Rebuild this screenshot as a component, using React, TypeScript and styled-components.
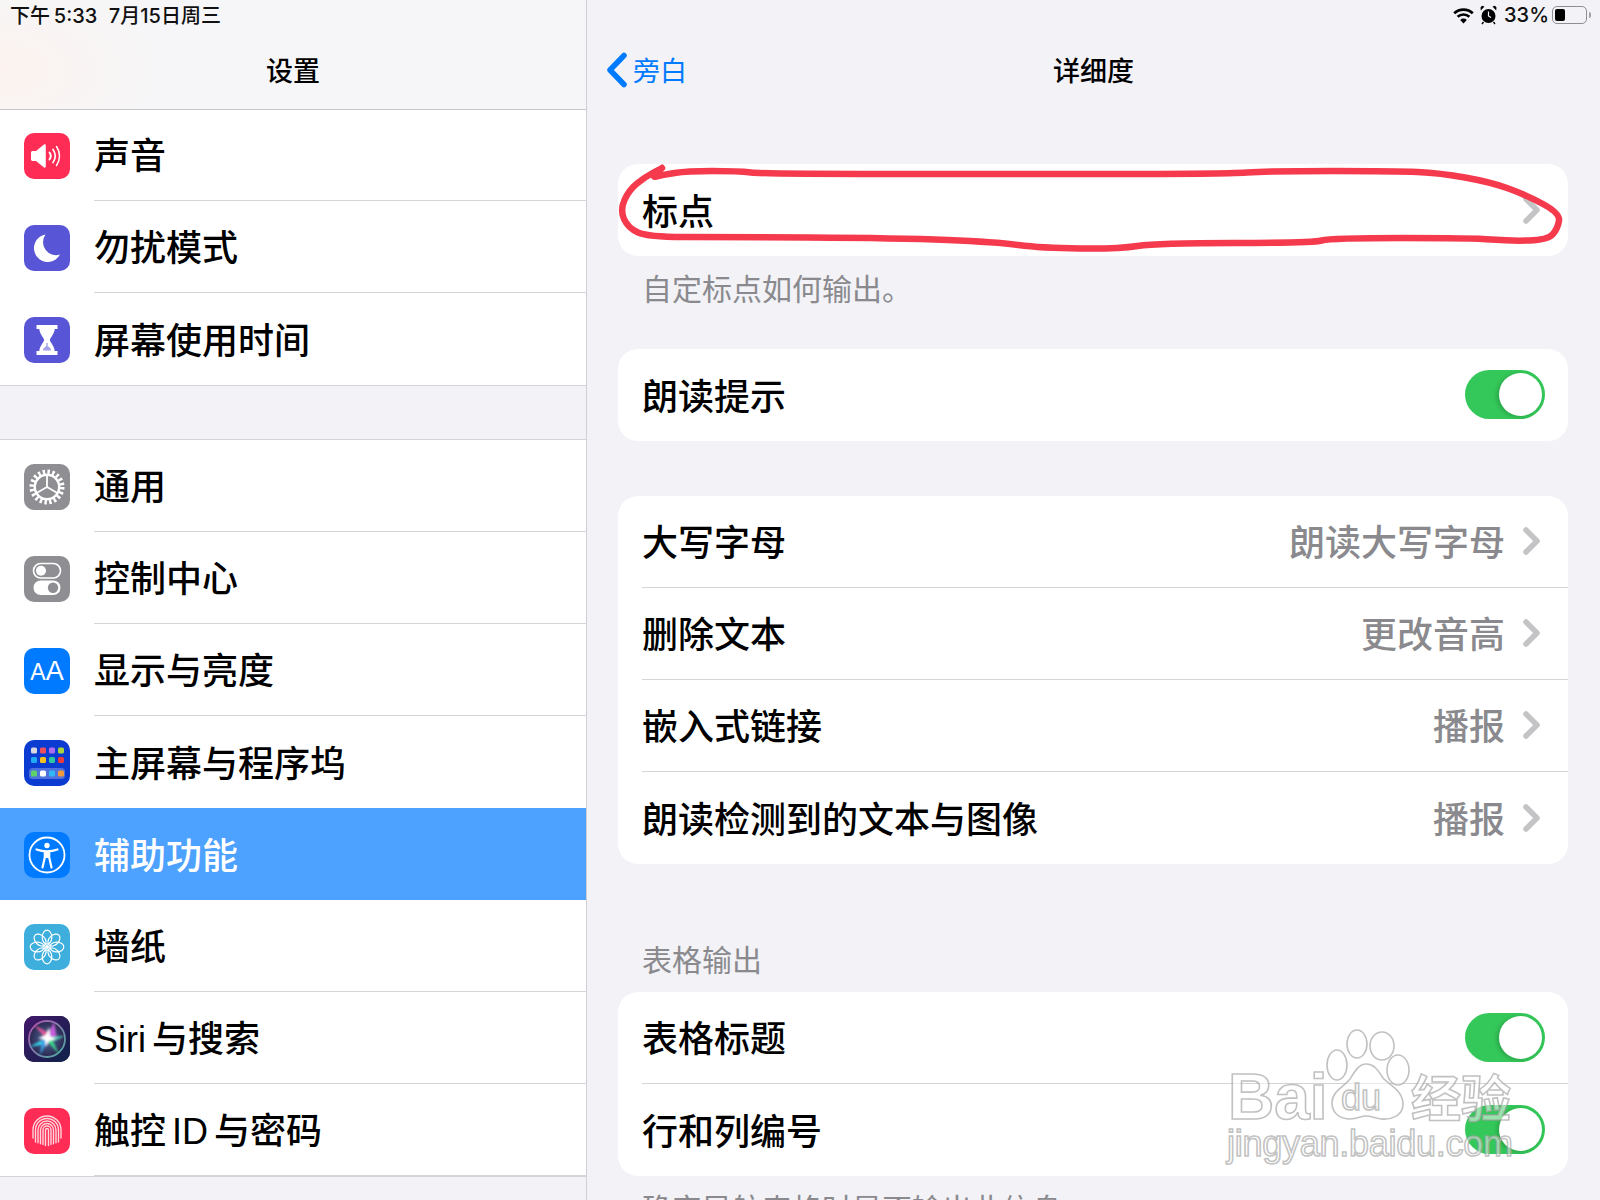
import React from 'react';
import styled, { createGlobalStyle } from 'styled-components';

const GlobalStyle = createGlobalStyle`
  html, body {
    margin: 0;
    padding: 0;
    background: #f2f2f7;
  }
  * {
    box-sizing: border-box;
  }
`;

const fontStack = `Inter, "Noto Sans CJK SC", sans-serif`;
const listFont = `"Liberation Sans", "Noto Sans CJK SC", sans-serif`;

const Page = styled.div`
  position: relative;
  display: flex;
  width: 1600px;
  height: 1200px;
  overflow: hidden;
  font-family: ${fontStack};
  color: #000;
  background: #f2f2f7;
`;

const Sidebar = styled.aside`
  flex: 0 0 587px;
  height: 1200px;
  overflow: hidden;
  border-right: 1px solid #cfcfd6;
  background: #f2f2f7;
`;

const SideHeader = styled.header`
  height: 110px;
  margin-bottom: -1px;
  border-bottom: 1.5px solid #c9c9cd;
  background:
    radial-gradient(ellipse 170px 100px at 0 70px, #fcf3ef 0%, rgba(252, 243, 239, 0) 100%),
    #f6f6f8;
  position: relative;
  z-index: 1;
`;

const StatusBar = styled.div`
  display: flex;
  align-items: center;
  justify-content: space-between;
  height: 28px;
  padding: 0 10px;
  font-size: 20px;
  font-weight: 500;
  word-spacing: -1.5px;
  white-space: pre;
  color: #111;
`;

const StatusRight = styled.div`
  display: flex;
  align-items: center;
  justify-content: flex-end;
  height: 30px;
  padding-right: 9px;
  font-size: 20px;
  font-weight: 500;
  color: #111;
`;

const BarTitle = styled.div`
  height: 80px;
  line-height: 87px;
  text-align: center;
  font-size: 27px;
  font-weight: 500;
`;

const SideGroup = styled.div<{ $gap?: boolean }>`
  margin-top: ${p => (p.$gap ? '54px' : '0')};
  background: #fff;
  border-top: ${p => (p.$gap ? '1.5px solid #d4d4d8' : '0')};
  box-shadow: 0 1px 0 #d4d4d8;
`;

const SideRow = styled.div<{ $active?: boolean }>`
  display: flex;
  align-items: center;
  height: 92px;
  padding-left: 24px;
  background: ${p => (p.$active ? '#4da2ff' : '#fff')};
  color: ${p => (p.$active ? '#fff' : '#000')};
`;

const SideLabel = styled.div<{ $line: 'inset' | 'none' }>`
  display: flex;
  align-items: center;
  flex: 1;
  height: 92px;
  margin-left: 24px;
  padding-bottom: 3px;
  font-family: ${listFont};
  font-size: 36px;
  font-weight: 500;
  word-spacing: -4px;
  white-space: pre;
  border-bottom: ${p => (p.$line === 'inset' ? '1.5px solid #d4d4d8' : '0')};
`;

const IconTile = styled.div<{ $bg: string }>`
  display: flex;
  align-items: center;
  justify-content: center;
  flex: 0 0 46px;
  width: 46px;
  height: 46px;
  margin-top: 2px;
  overflow: hidden;
  border-radius: 10px;
  background: ${p => p.$bg};
`;

const TileText = styled.span`
  font-family: "Liberation Sans", sans-serif;
  font-size: 27px;
  color: #fff;
  letter-spacing: 0;
`;

const SmallA = styled.span`
  font-size: 23px;
`;

const Detail = styled.main`
  flex: 1;
  height: 1200px;
  overflow: hidden;
`;

const NavBar = styled.div`
  display: grid;
  grid-template-columns: 1fr auto 1fr;
  align-items: center;
  height: 79px;
  padding-left: 18px;
  padding-right: 18px;
`;

const BackLink = styled.div`
  display: flex;
  align-items: center;
  gap: 5px;
  font-size: 27px;
  color: #007aff;
`;

const DetailTitle = styled.div`
  font-size: 27px;
  font-weight: 500;
`;

const Percent = styled.span`
  margin: 0 3px 0 7px;
`;

const Battery = styled.div`
  position: relative;
  width: 35px;
  height: 18px;
  padding: 2px;
  border: 1.5px solid #8e8e93;
  border-radius: 5px;
`;

const BatteryFill = styled.div`
  width: 10px;
  height: 100%;
  border-radius: 2px;
  background: #000;
`;

const BatteryNub = styled.div`
  width: 2px;
  height: 6px;
  margin-left: 2px;
  border-radius: 0 2px 2px 0;
  background: #a0a0a5;
`;

const WifiSlot = styled.span`
  display: flex;
  margin-right: 6px;
`;

const Content = styled.div`
  padding: 55px 32px 0 31px;
`;

const Card = styled.section`
  overflow: hidden;
  border-radius: 20px;
  background: #fff;
`;

const Row = styled.div`
  display: flex;
  align-items: center;
  height: 92px;
  padding-left: 24px;
`;

const RowInner = styled.div<{ $last?: boolean }>`
  display: flex;
  align-items: center;
  flex: 1;
  height: 92px;
  padding-right: 28px;
  padding-bottom: 1px;
  font-family: ${listFont};
  font-size: 36px;
  font-weight: 500;
  border-bottom: ${p => (p.$last ? '0' : '1.5px solid #d4d4d8')};
`;

const RowTitle = styled.span`
  flex: 1;
  margin-bottom: 2px;
`;

const RowValue = styled.span`
  margin-right: 18px;
  margin-bottom: 2px;
  color: #8a8a8e;
`;

const Note = styled.div`
  height: 93px;
  padding-left: 24px;
  line-height: 66px;
  font-size: 30px;
  color: #8a8a8e;
`;

const Spacer = styled.div`
  height: 55px;
`;

const SectionHead = styled.div`
  display: flex;
  align-items: flex-end;
  height: 128px;
  padding: 0 0 10px 24px;
  line-height: 44px;
  font-size: 30px;
  color: #8a8a8e;
`;

const ToggleTrack = styled.div`
  display: flex;
  align-items: center;
  justify-content: flex-end;
  width: 80px;
  height: 49px;
  margin-right: -5px;
  padding-right: 3px;
  border-radius: 25px;
  background: #34c759;
`;

const ToggleKnob = styled.div`
  width: 43px;
  height: 43px;
  border-radius: 50%;
  background: #fff;
  box-shadow: -2px 1px 4px rgba(0, 0, 0, 0.18);
`;

const Overlay = styled.svg`
  position: absolute;
  top: 0;
  left: 0;
  z-index: 2;
  pointer-events: none;
`;

const Glyph = ({ children }: { children: React.ReactNode }) => (
  <svg width="46" height="46" viewBox="0 0 46 46" fill="none">
    {children}
  </svg>
);

const SoundIcon = () => (
  <Glyph>
    <path d="M7 19.500c0-.8.6-1.500 1.500-1.500H12l8-6.500c.8-.6 1.800-.1 1.800.9v21.200c0 1-1 1.500-1.800.9L12 28H8.500C7.600 28 7 27.300 7 26.500z" fill="#fff" />
    <path d="M25.500 19.500c1.600 2.200 1.600 4.800 0 7" stroke="#fff" strokeWidth="2" strokeLinecap="round" />
    <path d="M29 16.500c2.800 4 2.800 9 0 13" stroke="#fff" strokeWidth="1.700" strokeLinecap="round" />
    <path d="M32.500 13.500c4 5.800 4 13.200 0 19" stroke="#fff" strokeWidth="1.500" strokeLinecap="round" />
  </Glyph>
);

const MoonIcon = () => (
  <Glyph>
    <path d="M21.500 9.500A13.800 13.800 0 1 0 36 29.500 A13 13 0 0 1 21.500 9.500Z" fill="#fff" />
  </Glyph>
);

const HourglassIcon = () => (
  <Glyph>
    <path d="M12.500 8h21v4h-2.800c-.3 4.800-3.800 7.800-4.900 11 1.100 3.200 4.600 6.200 4.900 11h2.800v4h-21v-4h2.800c.3-4.800 3.800-7.800 4.900-11-1.100-3.200-4.600-6.200-4.900-11h-2.800z" fill="#fff" />
    <path d="M22.300 26v3.300c-1.900 1-3.200 2.500-3.500 4.200h8.400c-.3-1.700-1.600-3.200-3.500-4.200V26z" fill="#5856d6" opacity="0.55" />
  </Glyph>
);

const GearIcon = () => (
  <Glyph>
    <circle cx="23" cy="23" r="15" stroke="#fff" strokeWidth="5" strokeDasharray="2.400 2.312" />
    <circle cx="23" cy="23" r="12.200" stroke="#fff" strokeWidth="2.400" />
    <path d="M23 23V11M23 23l-10.400 6M23 23l10.400 6" stroke="#fff" strokeWidth="1.800" />
  </Glyph>
);

const SwitchesIcon = () => (
  <Glyph>
    <rect x="9.500" y="7.500" width="27" height="14.500" rx="7.200" stroke="#fff" strokeWidth="1.600" />
    <circle cx="17" cy="14.700" r="5" fill="#fff" />
    <rect x="9.500" y="24.500" width="27" height="14.500" rx="7.200" fill="#fff" />
    <circle cx="29" cy="31.700" r="5.200" fill="#8e8e93" />
  </Glyph>
);

const dotColors = [
  ['#d8d8de', '#ef4f5f', '#b06cf0', '#a8d63c'],
  ['#1eaaf5', '#f7c21c', '#2fc7a0', '#ea3a3a'],
];
const dockColors = ['#5fd16a', '#ffffff', '#2fb8f5', '#f59a3c'];

const HomeIcon = () => (
  <Glyph>
    {dotColors.map((row, y) =>
      row.map((color, x) => (
        <rect key={`${x}-${y}`} x={7 + x * 9} y={7.500 + y * 9.500} width="6" height="6" rx="1.500" fill={color} />
      )),
    )}
    <rect x="5" y="28" width="36" height="11" rx="3.500" fill="#fff" opacity="0.28" />
    {dockColors.map((color, x) => (
      <rect key={color} x={7 + x * 9} y="30.500" width="6" height="6" rx="1.500" fill={color} />
    ))}
  </Glyph>
);

const AccessIcon = () => (
  <Glyph>
    <circle cx="23" cy="23" r="17.500" stroke="#fff" strokeWidth="1.800" />
    <circle cx="23" cy="13.500" r="2.700" fill="#fff" />
    <path d="M12.500 17.500c3.500 1.300 7 1.900 10.500 1.900s7-.6 10.500-1.900" stroke="#fff" strokeWidth="2.200" strokeLinecap="round" />
    <path d="M20.800 19v6.500L18.500 35.500M25.200 19v6.500l2.300 10" stroke="#fff" strokeWidth="2.200" strokeLinecap="round" />
    <path d="M20.800 19h4.400v7h-4.400z" fill="#fff" />
  </Glyph>
);

const FlowerIcon = () => (
  <Glyph>
    {[0, 45, 90, 135, 180, 225, 270, 315].map(angle => (
      <ellipse
        key={angle}
        cx="23"
        cy="13.200"
        rx="4.800"
        ry="7"
        stroke="#fff"
        strokeWidth="1.200"
        transform={`rotate(${angle} 23 23)`}
      />
    ))}
    <circle cx="23" cy="23" r="2" fill="#fff" />
  </Glyph>
);

const SiriIcon = () => (
  <Glyph>
    <defs>
      <linearGradient id="siriBg" x1="0" y1="0" x2="1" y2="1">
        <stop offset="0" stopColor="#42176a" />
        <stop offset="1" stopColor="#0e2248" />
      </linearGradient>
      <linearGradient id="siriRing" x1="0" y1="0" x2="1" y2="1">
        <stop offset="0" stopColor="#b04fb0" />
        <stop offset="1" stopColor="#49b0a0" />
      </linearGradient>
      <radialGradient id="siriCore">
        <stop offset="0" stopColor="#4f6a96" />
        <stop offset="1" stopColor="#2a2650" />
      </radialGradient>
      <filter id="siriBlur">
        <feGaussianBlur stdDeviation="1" />
      </filter>
    </defs>
    <rect width="46" height="46" fill="url(#siriBg)" />
    <circle cx="23" cy="23" r="18" fill="url(#siriCore)" stroke="url(#siriRing)" strokeWidth="1.800" />
    <g filter="url(#siriBlur)">
      <path d="M23 24L10 9l17 9z" fill="#e0559c" />
      <path d="M22 22l8-16 3 17z" fill="#c65cd8" />
      <path d="M24 21L5 31l17-3z" fill="#35d4e8" />
      <path d="M22 21l19-1-15 7z" fill="#52c8b0" />
      <path d="M21 23l14 15-8-17z" fill="#3bd48c" />
      <path d="M25 23l-9 16 2-15z" fill="#3a9fe8" />
      <path d="M25 11l1 9 6 3-7 2-3 6-1-7-7-2 8-3z" fill="#fff" />
    </g>
  </Glyph>
);

const FingerIcon = () => (
  <Glyph>
    {[1.500, 4, 6.500, 9, 11.500, 14].map(r => {
      const end = r > 12 ? 30 : 38 - r * 0.35;
      return (
        <path
          key={r}
          d={`M${23 - r} ${end}V22a${r} ${r} 0 0 1 ${r * 2} 0V${end}`}
          stroke="#fff"
          strokeOpacity="0.8"
          strokeWidth="1.400"
          strokeLinecap="round"
        />
      );
    })}
  </Glyph>
);

const ChevronRight = () => (
  <svg width="17" height="28" viewBox="0 0 17 28" fill="none">
    <path d="M3 3l11 11-11 11" stroke="#c4c4c7" strokeWidth="5.500" strokeLinecap="round" strokeLinejoin="round" />
  </svg>
);

const ChevronBack = () => (
  <svg width="23" height="36" viewBox="0 0 23 36" fill="none">
    <path d="M19 3.500L5 18l14 14.500" stroke="#007aff" strokeWidth="5.500" strokeLinecap="round" strokeLinejoin="round" />
  </svg>
);

const WifiIcon = () => (
  <svg width="21" height="17" viewBox="0 0 21 17" fill="none">
    <path d="M1.200 6.300a13.500 13.500 0 0 1 18.600 0" stroke="#000" strokeWidth="2.600" />
    <path d="M4.600 9.800a8.600 8.600 0 0 1 11.800 0" stroke="#000" strokeWidth="2.600" />
    <path d="M10.500 16.500L7.200 13a4.600 4.600 0 0 1 6.600 0z" fill="#000" />
  </svg>
);

const AlarmIcon = () => (
  <svg width="17" height="20" viewBox="0 0 17 20" fill="none">
    <circle cx="8.500" cy="11" r="7" fill="#000" />
    <path d="M8.500 6.500V11l2.500 1.500" stroke="#f2f2f7" strokeWidth="1.200" />
    <path d="M.8 5.500L4.500 1.500 2 .8.500 2.500zM16.200 5.500L12.500 1.500 15 .8l1.500 1.700z" fill="#000" />
    <path d="M3.500 17l-1.500 2M13.500 17l1.500 2" stroke="#000" strokeWidth="1.400" />
  </svg>
);

// hand drawn loop round the first row, points read off the screenshot
const loopPoints: [number, number][] = [
  [662, 168], [650, 178], [662, 175], [687, 171], [738, 171], [764, 174], [1000, 174], [1221, 174],
  [1273, 171], [1395, 171], [1440, 173], [1490, 182], [1524, 194], [1560, 213], [1558, 228], [1548, 240],
  [1510, 241], [1473, 238], [1331, 238], [1312, 243], [1157, 243], [1118, 249], [1041, 248], [996, 242],
  [899, 238], [719, 237], [648, 237], [628, 228], [620, 210], [629, 190], [645, 177], [662, 168],
];

const smoothPath = (pts: [number, number][]) => {
  let d = `M${pts[0][0]} ${pts[0][1]}`;
  for (let i = 1; i < pts.length - 1; i++) {
    const mx = (pts[i][0] + pts[i + 1][0]) / 2;
    const my = (pts[i][1] + pts[i + 1][1]) / 2;
    d += `Q${pts[i][0]} ${pts[i][1]} ${mx} ${my}`;
  }
  const last = pts[pts.length - 1];
  return `${d}L${last[0]} ${last[1]}`;
};

const wmStroke = { fill: 'rgba(255,255,255,0.5)', stroke: 'rgba(160,160,160,0.65)', strokeWidth: 1.6 };

const Annotations = () => (
  <Overlay width="1600" height="1200" viewBox="0 0 1600 1200" fill="none">
    <path d={smoothPath(loopPoints)} stroke="#f43a4c" strokeWidth="6.500" strokeLinecap="round" strokeLinejoin="round" />
    <g {...wmStroke}>
      <ellipse cx="1337" cy="1065" rx="10" ry="15" />
      <ellipse cx="1357" cy="1044" rx="10" ry="14" />
      <ellipse cx="1382" cy="1046" rx="12" ry="14" />
      <ellipse cx="1398" cy="1070" rx="11" ry="15" />
      <path d="M1366 1064c8 0 12 6 17 14 5 6 20 12 20 26 0 12-12 16-22 15-7-1-10-3-15-3s-9 3-16 3c-10 0-18-6-18-16 0-12 12-16 18-24 5-8 9-15 16-15z" />
      <text x="1228" y="1119" fontFamily="'Liberation Sans', sans-serif" fontWeight="700" fontSize="64">Bai</text>
      <text x="1341" y="1110" fontFamily="'Liberation Sans', sans-serif" fontSize="36">du</text>
      <text x="1411" y="1117" fontFamily="'Noto Sans CJK SC', sans-serif" fontWeight="700" fontSize="50">经验</text>
      <text x="1227" y="1156" fontFamily="'Liberation Sans', sans-serif" fontSize="36" textLength="286">jingyan.baidu.com</text>
    </g>
  </Overlay>
);

type SideItem = { label: string; bg: string; icon: React.ReactNode; active?: boolean; line?: 'inset' | 'none' };

const firstGroup: SideItem[] = [
  { label: '声音', bg: '#ff2d55', icon: <SoundIcon /> },
  { label: '勿扰模式', bg: '#5856d6', icon: <MoonIcon /> },
  { label: '屏幕使用时间', bg: '#5856d6', icon: <HourglassIcon />, line: 'none' },
];

const secondGroup: SideItem[] = [
  { label: '通用', bg: '#8e8e93', icon: <GearIcon /> },
  { label: '控制中心', bg: '#8e8e93', icon: <SwitchesIcon /> },
  { label: '显示与亮度', bg: '#007aff', icon: <TileText><SmallA>A</SmallA>A</TileText> },
  { label: '主屏幕与程序坞', bg: '#0b3bd0', icon: <HomeIcon />, line: 'none' },
  { label: '辅助功能', bg: '#007aff', icon: <AccessIcon />, active: true, line: 'none' },
  { label: '墙纸', bg: '#3eaedd', icon: <FlowerIcon /> },
  { label: 'Siri 与搜索', bg: '#1c1c3c', icon: <SiriIcon /> },
  { label: '触控 ID 与密码', bg: '#ff2d55', icon: <FingerIcon /> },
];

const SideRows = ({ items }: { items: SideItem[] }) => (
  <>
    {items.map(item => (
      <SideRow key={item.label} $active={item.active}>
        <IconTile $bg={item.bg}>{item.icon}</IconTile>
        <SideLabel $line={item.line ?? 'inset'}>{item.label}</SideLabel>
      </SideRow>
    ))}
  </>
);

const LinkRow = ({ title, value, last }: { title: string; value?: string; last?: boolean }) => (
  <Row>
    <RowInner $last={last}>
      <RowTitle>{title}</RowTitle>
      {value && <RowValue>{value}</RowValue>}
      <ChevronRight />
    </RowInner>
  </Row>
);

const ToggleRow = ({ title, last }: { title: string; last?: boolean }) => (
  <Row>
    <RowInner $last={last}>
      <RowTitle>{title}</RowTitle>
      <ToggleTrack>
        <ToggleKnob />
      </ToggleTrack>
    </RowInner>
  </Row>
);

const App = () => {
  return (
    <Page>
      <GlobalStyle />
      <Sidebar>
        <SideHeader>
          <StatusBar>下午 5:33   7月15日周三</StatusBar>
          <BarTitle>设置</BarTitle>
        </SideHeader>
        <SideGroup>
          <SideRows items={firstGroup} />
        </SideGroup>
        <SideGroup $gap>
          <SideRows items={secondGroup} />
        </SideGroup>
      </Sidebar>
      <Detail>
        <StatusRight>
          <WifiSlot>
            <WifiIcon />
          </WifiSlot>
          <AlarmIcon />
          <Percent>33%</Percent>
          <Battery>
            <BatteryFill />
          </Battery>
          <BatteryNub />
        </StatusRight>
        <NavBar>
          <BackLink>
            <ChevronBack />
            旁白
          </BackLink>
          <DetailTitle>详细度</DetailTitle>
        </NavBar>
        <Content>
          <Card>
            <LinkRow title="标点" last />
          </Card>
          <Note>自定标点如何输出。</Note>
          <Card>
            <ToggleRow title="朗读提示" last />
          </Card>
          <Spacer />
          <Card>
            <LinkRow title="大写字母" value="朗读大写字母" />
            <LinkRow title="删除文本" value="更改音高" />
            <LinkRow title="嵌入式链接" value="播报" />
            <LinkRow title="朗读检测到的文本与图像" value="播报" last />
          </Card>
          <SectionHead>表格输出</SectionHead>
          <Card>
            <ToggleRow title="表格标题" />
            <ToggleRow title="行和列编号" last />
          </Card>
          <Note>确定导航表格时是否输出此信息</Note>
        </Content>
      </Detail>
      <Annotations />
    </Page>
  );
};

export default App;
